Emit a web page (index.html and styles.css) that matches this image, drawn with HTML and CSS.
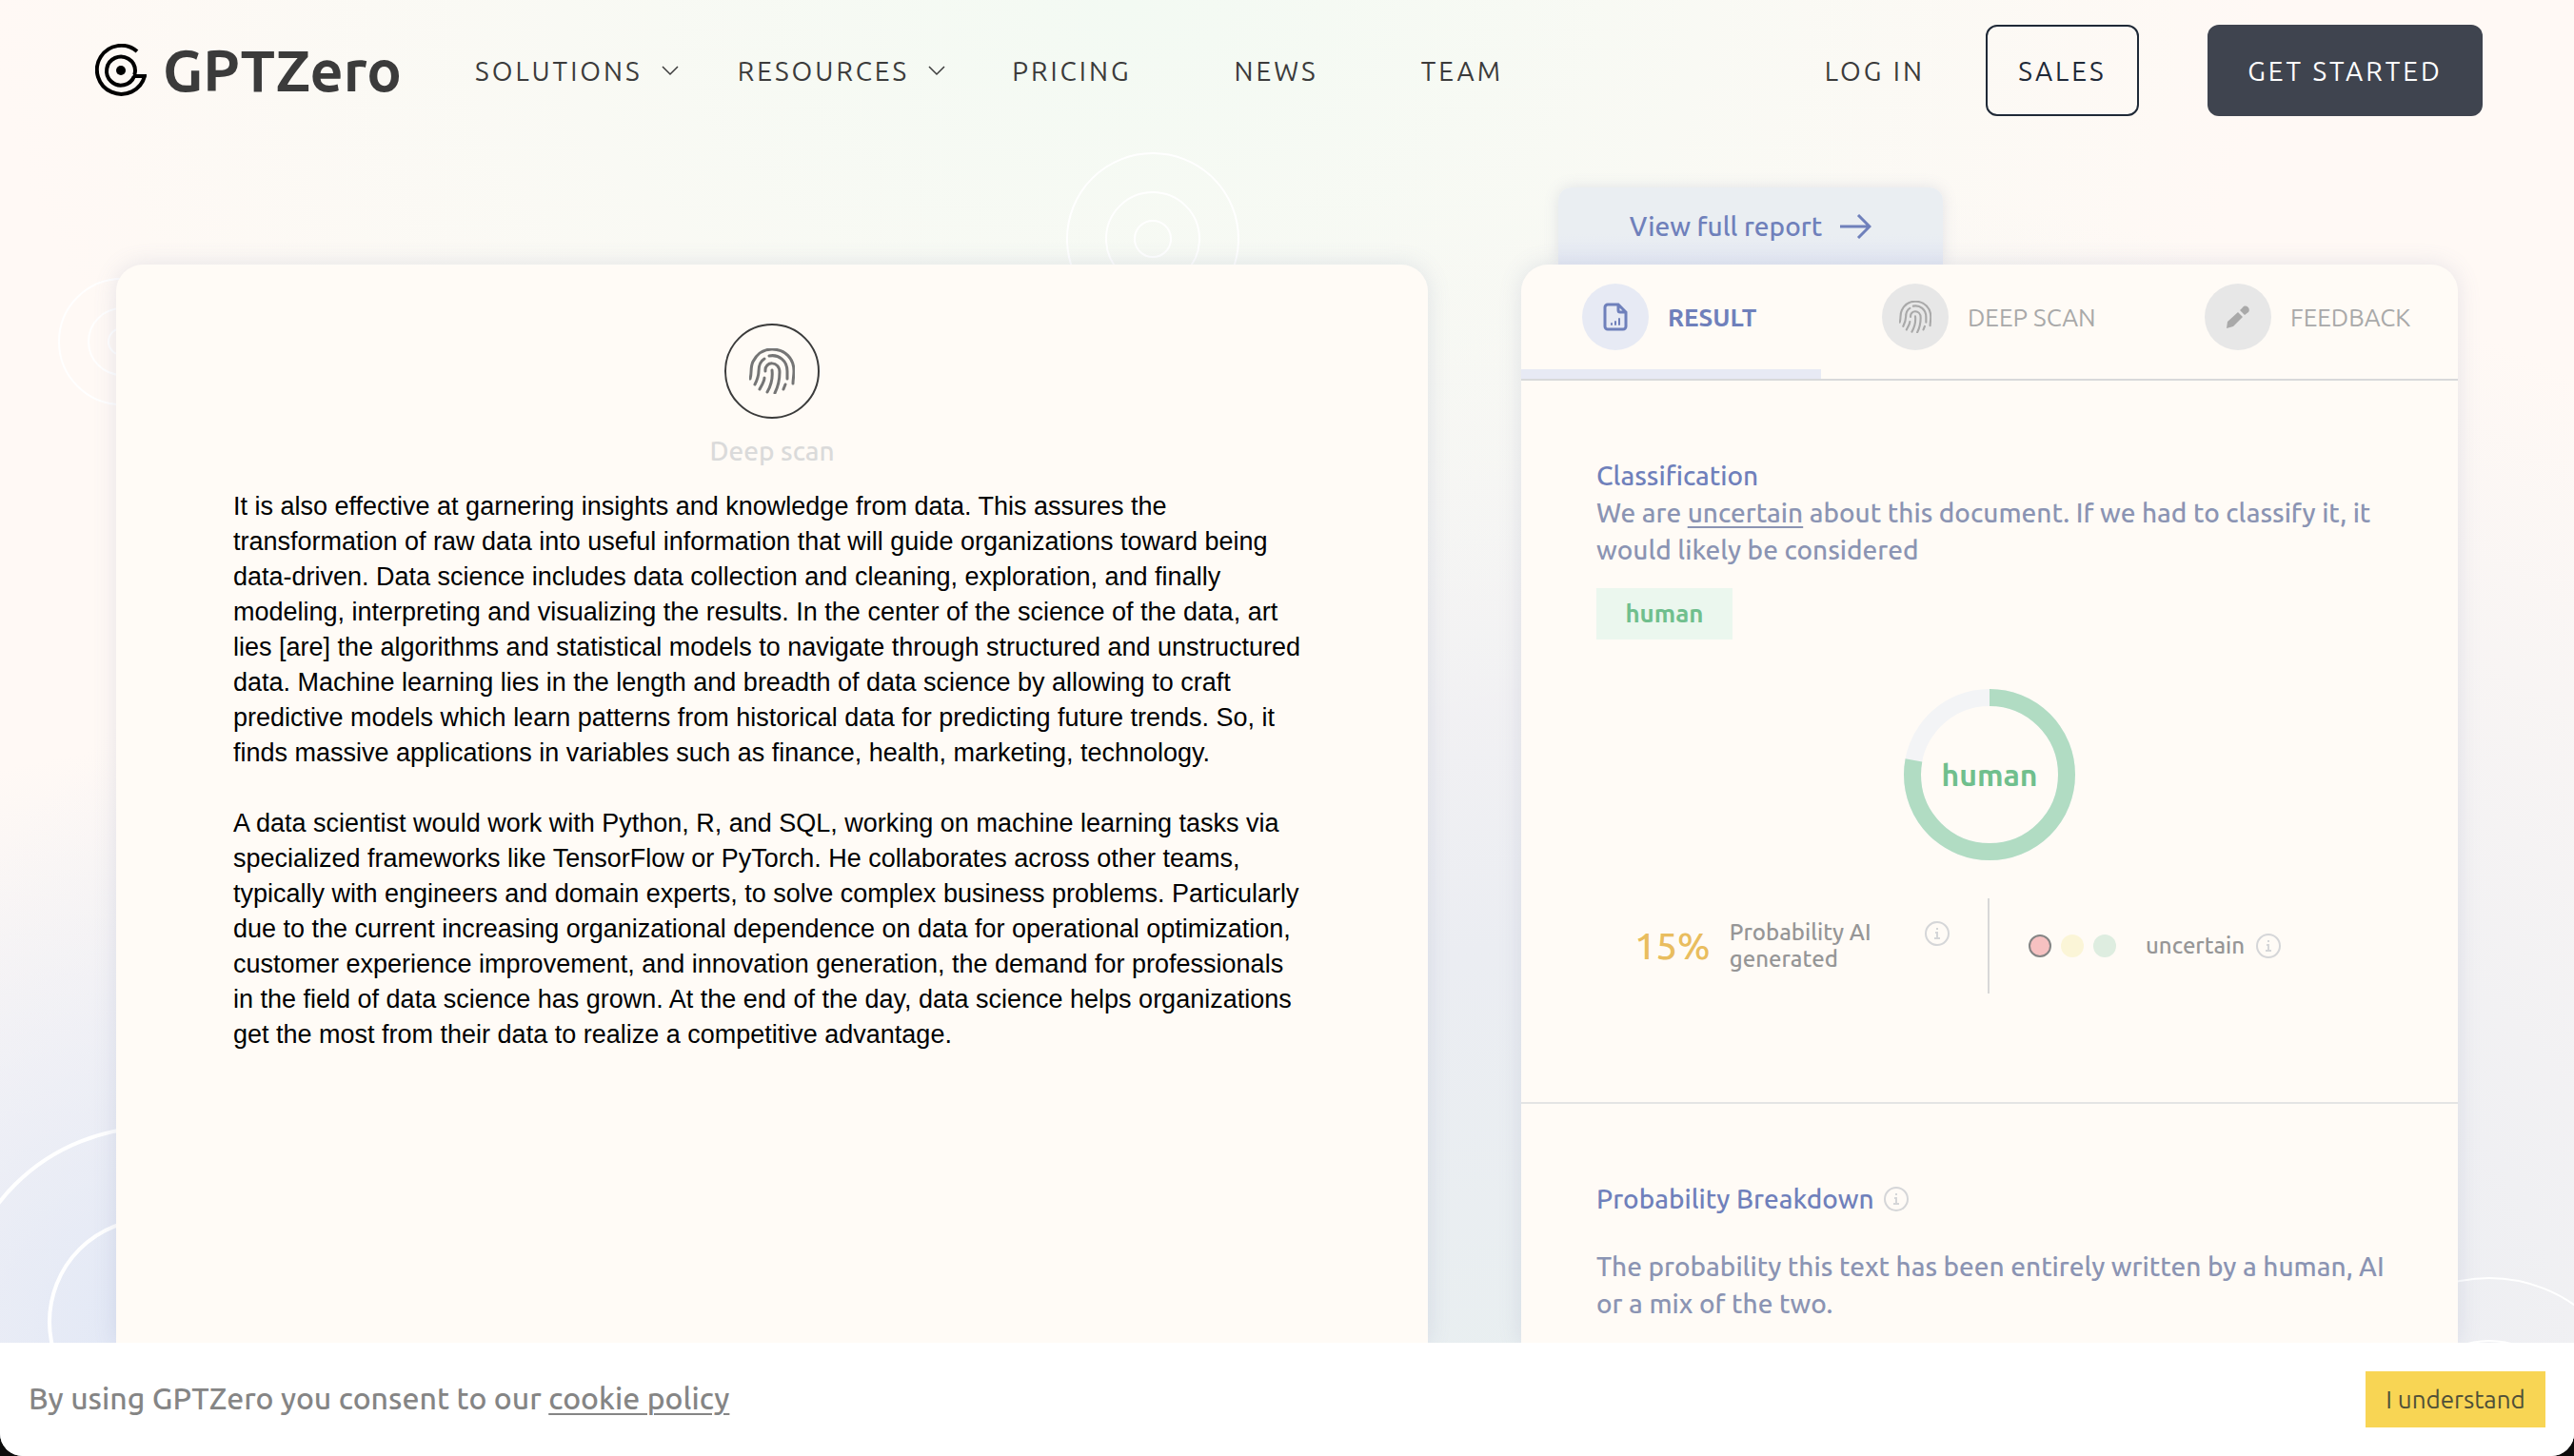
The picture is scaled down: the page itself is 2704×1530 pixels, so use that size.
FILE: index.html
```html
<!DOCTYPE html>
<html lang="en">
<head>
<meta charset="utf-8">
<title>GPTZero</title>
<link rel="stylesheet" href="styles.css">
</head>
<body>
<div class="page">
  <svg class="rings" aria-hidden="true">
    <g class="ring-thin"><circle cx="1211" cy="251" r="90"/><circle cx="1211" cy="251" r="49"/><circle cx="1211" cy="251" r="19"/></g>
    <g class="ring-thin"><circle cx="128" cy="359" r="66"/><circle cx="128" cy="359" r="35"/><circle cx="128" cy="359" r="14"/></g>
    <g class="ring-thick"><circle cx="160" cy="1389" r="204"/><circle cx="160" cy="1389" r="108"/></g>
    <g class="ring-thin"><circle cx="2615" cy="1498" r="155"/><circle cx="2615" cy="1498" r="89"/></g>
  </svg>

  <header class="header">
    <a class="logo" href="#">
      <svg class="logo-mark" viewBox="0 0 54 56" aria-hidden="true">
        <circle cx="27" cy="28" r="5"/>
        <path d="M44 8A25.500 25.500 0 1 0 52 34H40"/>
        <path d="M41 34A15 15 0 1 1 42 28C42 31 41 34 40 34"/>
      </svg>
      <span class="logo-text">GPTZero</span>
    </a>
    <nav class="nav">
      <a class="nav-link" href="#">SOLUTIONS <svg class="chevron" viewBox="0 0 18 12" aria-hidden="true"><path d="M1 2l8 8 8-8"/></svg></a>
      <a class="nav-link" href="#">RESOURCES <svg class="chevron" viewBox="0 0 18 12" aria-hidden="true"><path d="M1 2l8 8 8-8"/></svg></a>
      <a class="nav-link nav-plain" href="#">PRICING</a>
      <a class="nav-link nav-plain" href="#">NEWS</a>
      <a class="nav-link nav-plain" href="#">TEAM</a>
    </nav>
    <div class="account">
      <a class="nav-link" href="#">LOG IN</a>
      <button class="btn btn-outline" type="button">SALES</button>
      <button class="btn btn-dark" type="button">GET STARTED</button>
    </div>
  </header>

  <main class="main">
    <section class="card document">
      <button class="scan" type="button">
        <span class="scan-circle"><svg class="print" viewBox="0 0 48 48" aria-hidden="true"><use href="#print"/></svg></span>
        <span>Deep scan</span>
      </button>
      <div class="document-text">
        <p>It is also effective at garnering insights and knowledge from data. This assures the<br>transformation of raw data into useful information that will guide organizations toward being<br>data-driven. Data science includes data collection and cleaning, exploration, and finally<br>modeling, interpreting and visualizing the results. In the center of the science of the data, art<br>lies [are] the algorithms and statistical models to navigate through structured and unstructured<br>data. Machine learning lies in the length and breadth of data science by allowing to craft<br>predictive models which learn patterns from historical data for predicting future trends. So, it<br>finds massive applications in variables such as finance, health, marketing, technology.</p>
        <p>A data scientist would work with Python, R, and SQL, working on machine learning tasks via<br>specialized frameworks like TensorFlow or PyTorch. He collaborates across other teams,<br>typically with engineers and domain experts, to solve complex business problems. Particularly<br>due to the current increasing organizational dependence on data for operational optimization,<br>customer experience improvement, and innovation generation, the demand for professionals<br>in the field of data science has grown. At the end of the day, data science helps organizations<br>get the most from their data to realize a competitive advantage.</p>
      </div>
    </section>

    <div class="report">
      <a class="full-report" href="#">View full report
        <svg class="arrow" viewBox="0 0 34 26" aria-hidden="true"><path d="M1 13h31M20 1l12 12-12 12"/></svg>
      </a>
      <section class="card results">
        <div class="tabs">
          <button class="tab tab-active" type="button">
            <span class="tab-icon"><svg class="file" viewBox="0 0 26 30" aria-hidden="true"><path d="M5 2h11l8 8v15a3 3 0 0 1-3 3H5a3 3 0 0 1-3-3V5a3 3 0 0 1 3-3zM16 2v6a2 2 0 0 0 2 2h6"/><path class="file-bars" d="M9 23v-1M13 23v-3M17 23v-6"/></svg></span>
            <span>RESULT</span>
          </button>
          <button class="tab" type="button">
            <span class="tab-icon"><svg class="tab-print" viewBox="0 0 48 48" aria-hidden="true"><use href="#print"/></svg></span>
            <span>DEEP SCAN</span>
          </button>
          <button class="tab" type="button">
            <span class="tab-icon"><svg class="pencil" viewBox="0 0 24 24" aria-hidden="true"><path d="M0 24l1-7L12 7l5 5L7 22zM14 5l3-3c3-4 9 1 6 5l-4 3z"/></svg></span>
            <span>FEEDBACK</span>
          </button>
        </div>

        <div class="classification">
          <h2 class="section-title">Classification</h2>
          <p class="section-text">We are <u>uncertain</u> about this document. If we had to classify it, it<br>would likely be considered</p>
          <span class="verdict">human</span>
          <div class="gauge">
            <svg class="gauge-ring" viewBox="0 0 180 180" aria-hidden="true">
              <circle class="gauge-track" cx="90" cy="90" r="81"/>
              <circle class="gauge-value" cx="90" cy="90" r="81" pathLength="100"/>
            </svg>
            <span class="gauge-label">human</span>
          </div>
          <div class="stats">
            <div class="stat stat-probability">
              <strong class="percent">15%</strong>
              <span class="stat-label">Probability AI<br>generated</span>
              <svg class="info info-raised" viewBox="0 0 26 26" aria-hidden="true"><use href="#info"/></svg>
            </div>
            <div class="stat stat-confidence">
              <span class="dots"><i class="dot dot-red"></i><i class="dot dot-yellow"></i><i class="dot dot-green"></i></span>
              <span class="stat-label">uncertain</span>
              <svg class="info" viewBox="0 0 26 26" aria-hidden="true"><use href="#info"/></svg>
            </div>
          </div>
        </div>

        <div class="breakdown">
          <h2 class="section-title">Probability Breakdown <svg class="info" viewBox="0 0 26 26" aria-hidden="true"><use href="#info"/></svg></h2>
          <p class="section-text">The probability this text has been entirely written by a human, AI<br>or a mix of the two.</p>
        </div>
      </section>
    </div>
  </main>

  <footer class="cookie-wrap">
    <div class="cookie">
      <p class="cookie-text">By using GPTZero you consent to our <a href="#">cookie policy</a></p>
      <button class="accept" type="button">I understand</button>
    </div>
  </footer>
</div>

<svg class="symbols" aria-hidden="true">
  <symbol id="print" viewBox="0 0 48 48">
    <path d="M1 32C3 26 1 20 4 14C8 6 15 1 24 1C38 1 47 11 47 24C47 29 46 33 46 37M21 8C31 6 40 13 40 24V32M16 11C11 14 10 18 10 24C10 29 8 34 6 38M17 24C16 13 32 13 32 25C32 33 30 41 27 47M24 23C25 32 22 41 19 46M16 31C16 35 13 39 11 43M38 38L36 43"/>
  </symbol>
  <symbol id="info" viewBox="0 0 26 26">
    <circle cx="13" cy="13" r="12"/>
    <path d="M13 7v2M11 12h2v6M10 18h6"/>
  </symbol>
</svg>
</body>
</html>
```
FILE: styles.css
```css
* {
  box-sizing: border-box;
}

html {
  background: #0c0c0c;
}

body,
p,
h2 {
  margin: 0;
}

body {
  font-family: Ubuntu, "Noto Sans", sans-serif;
  font-size: 26px;
  color: #3b3b3b;
}

button {
  padding: 0;
  border: 0;
  background: none;
  font: inherit;
  color: inherit;
}

svg {
  flex: none;
  fill: none;
  stroke: currentColor;
}

.symbols {
  display: none;
}

.page {
  position: relative;
  display: flex;
  flex-direction: column;
  height: 100vh;
  overflow: hidden;
  border-radius: 0 0 24px 24px;
  background:
    radial-gradient(circle at 6% 92%, #e2e8f6 0, rgba(226, 232, 246, 0) 620px),
    radial-gradient(ellipse 1200px 800px at 44% 0, #f3faf3 0, rgba(243, 250, 243, 0) 100%),
    radial-gradient(ellipse 1900px 1350px at 62% 100%, #e8eff0 0, #ebedf2 40%, rgba(235, 237, 242, 0) 100%),
    #fff9f5;
}

.rings {
  position: absolute;
  inset: 0;
  width: 100%;
  height: 100%;
  stroke: #fff;
}

.ring-thin {
  stroke-width: 2;
}

.ring-thick {
  stroke-width: 4;
}

.header {
  position: relative;
  display: flex;
  align-items: center;
  height: 148px;
  padding: 0 96px 0 100px;
}

.logo {
  display: flex;
  align-items: center;
  gap: 17px;
  width: 399px;
  color: #3b3b3b;
  text-decoration: none;
}

.logo-mark {
  width: 54px;
  height: 56px;
  stroke: #000;
  stroke-width: 4;
}

.logo-mark circle {
  fill: #000;
  stroke: none;
}

.logo-text {
  font-size: 61px;
  font-weight: 700;
  line-height: 64px;
}

.nav {
  display: flex;
  flex: 1;
  gap: 62px;
}

.nav-link {
  display: flex;
  align-items: center;
  gap: 20px;
  font-size: 28px;
  letter-spacing: 3px;
  color: #3b3b3b;
  text-decoration: none;
}

.nav-plain {
  padding-left: 8px;
}

.nav-plain + .nav-plain {
  padding-left: 46px;
}

.chevron {
  width: 18px;
  height: 12px;
  stroke-width: 1.5;
}

.account {
  display: flex;
  align-items: center;
}

.btn {
  height: 96px;
  border-radius: 12px;
  font-size: 28px;
  letter-spacing: 3px;
}

.btn-outline {
  width: 161px;
  margin: 0 72px 0 64px;
  border: 2px solid #1f2937;
  color: #1f2937;
}

.btn-dark {
  width: 289px;
  background: #3f444f;
  color: #fff;
}

.main {
  position: relative;
  display: grid;
  grid-template-columns: 1378fr 984fr;
  flex: 1;
  gap: 98px;
  min-height: 0;
  padding: 49px 122px 0;
}

.card {
  border-radius: 28px 28px 0 0;
  background: #fffbf6;
  box-shadow: 0 0 24px rgba(100, 110, 160, 0.16);
}

.document {
  margin-top: 81px;
  padding: 62px 123px 0;
}

.scan {
  display: flex;
  flex-direction: column;
  align-items: center;
  gap: 16px;
  margin: 0 auto;
  font-size: 28px;
  font-weight: 500;
  line-height: 36px;
  color: #dadada;
}

.scan-circle {
  display: flex;
  align-items: center;
  justify-content: center;
  width: 100px;
  height: 100px;
  border: 2px solid #3b3b3b;
  border-radius: 50%;
  color: #757575;
}

.print {
  width: 48px;
  height: 48px;
  overflow: visible;
  stroke-width: 3;
  stroke-linecap: round;
}

.document-text {
  display: grid;
  gap: 37px;
  margin-top: 22px;
  font-family: "Liberation Sans", Arial, sans-serif;
  font-size: 27px;
  line-height: 37px;
  color: #000;
  white-space: nowrap;
}

.report {
  display: flex;
  flex-direction: column;
  min-width: 0;
}

.full-report {
  display: flex;
  align-items: center;
  justify-content: center;
  gap: 18px;
  width: 404px;
  height: 81px;
  margin-left: 39px;
  border-radius: 14px 14px 0 0;
  background: linear-gradient(#eaeef2 60%, #e5e9f4);
  box-shadow: 0 0 16px rgba(100, 110, 160, 0.16);
  font-size: 28px;
  font-weight: 500;
  color: #6f80bb;
  text-decoration: none;
}

.arrow {
  width: 34px;
  height: 26px;
  stroke-width: 3;
}

.results {
  position: relative;
  flex: 1;
}

.tabs {
  display: grid;
  grid-template-columns: 315px 339px 1fr;
  height: 122px;
  border-bottom: 2px solid #d8d9da;
}

.tab {
  display: flex;
  align-items: center;
  gap: 20px;
  padding-left: 64px;
  border-bottom: 10px solid transparent;
  font-size: 26px;
  color: #a9a9a9;
}

.tab-active {
  border-color: #e7eaf4;
  font-weight: 700;
  color: #6f80bb;
}

.tab-icon {
  display: flex;
  align-items: center;
  justify-content: center;
  width: 70px;
  height: 70px;
  border-radius: 50%;
  background: #e7e7e7;
}

.tab-active .tab-icon {
  background: #e7eaf4;
}

.file {
  width: 26px;
  height: 30px;
  stroke-width: 3;
  stroke-linecap: round;
}

.file-bars {
  stroke-width: 2;
}

.tab-print {
  width: 34px;
  height: 34px;
  overflow: visible;
  stroke-width: 3;
  stroke-linecap: round;
}

.pencil {
  width: 24px;
  height: 24px;
  fill: currentColor;
  stroke: none;
}

.classification {
  height: 760px;
  padding: 80px 79px 0;
  border-bottom: 2px solid #e4e4e4;
}

.section-title {
  display: flex;
  align-items: center;
  gap: 10px;
  font-size: 28px;
  font-weight: 500;
  line-height: 39px;
  color: #6f80bb;
}

.section-text {
  font-size: 28px;
  font-weight: 500;
  line-height: 39px;
  color: #8b94b3;
  white-space: nowrap;
}

.section-text u {
  text-decoration-thickness: 2px;
  text-underline-offset: 4px;
}

.verdict {
  display: block;
  width: 143px;
  margin-top: 21px;
  background: #ebf7ee;
  font-weight: 700;
  line-height: 54px;
  text-align: center;
  color: #70bf8d;
}

.gauge {
  display: grid;
  place-items: center;
  margin-top: 52px;
}

.gauge > * {
  grid-area: 1 / 1;
}

.gauge-ring {
  width: 180px;
  height: 180px;
  stroke-width: 18;
}

.gauge-track {
  stroke: #f3f4f6;
}

.gauge-value {
  stroke: #b1dcc3;
  stroke-dasharray: 78 100;
  transform: rotate(-90deg);
  transform-origin: center;
}

.gauge-label {
  font-size: 32px;
  font-weight: 700;
  color: #70bf8d;
}

.stats {
  display: grid;
  grid-template-columns: 1fr 1fr;
  height: 100px;
  margin-top: 40px;
}

.stat {
  display: flex;
  align-items: center;
  font-size: 24px;
  font-weight: 500;
  line-height: 28px;
  color: #969696;
}

.stat-probability {
  padding: 0 40px;
  border-right: 2px solid #d8d8d8;
}

.percent {
  font-size: 40px;
  font-weight: 500;
  color: #e9bd5e;
}

.stat-probability .stat-label {
  flex: 1;
  margin-left: 20px;
}

.stat-confidence {
  padding-left: 41px;
}

.dots {
  display: flex;
  gap: 10px;
  margin-right: 31px;
}

.dot {
  width: 24px;
  height: 24px;
  border-radius: 50%;
}

.dot-red {
  border: 2px solid #858585;
  background: #f6c1c1;
}

.dot-yellow {
  background: #fbf5d7;
}

.dot-green {
  background: #deede0;
}

.info {
  width: 26px;
  height: 26px;
  color: #d5d6d8;
  stroke-width: 2;
}

.info-raised {
  margin-bottom: 26px;
}

.stat-confidence .info {
  margin-left: 12px;
}

.breakdown {
  padding: 80px 79px 0;
}

.breakdown .section-text {
  margin-top: 32px;
}

.cookie-wrap {
  position: relative;
}

.cookie {
  display: flex;
  align-items: center;
  justify-content: space-between;
  height: 119px;
  padding: 0 30px;
  background: #fff;
}

.cookie-text {
  padding-bottom: 4px;
  font-size: 32px;
  font-weight: 500;
  color: #858585;
}

.cookie-text a {
  color: inherit;
  text-decoration-thickness: 2px;
  text-underline-offset: 4px;
}

.accept {
  width: 189px;
  height: 59px;
  background: #f8d554;
  font-size: 26px;
  color: #4f4f38;
}
```
